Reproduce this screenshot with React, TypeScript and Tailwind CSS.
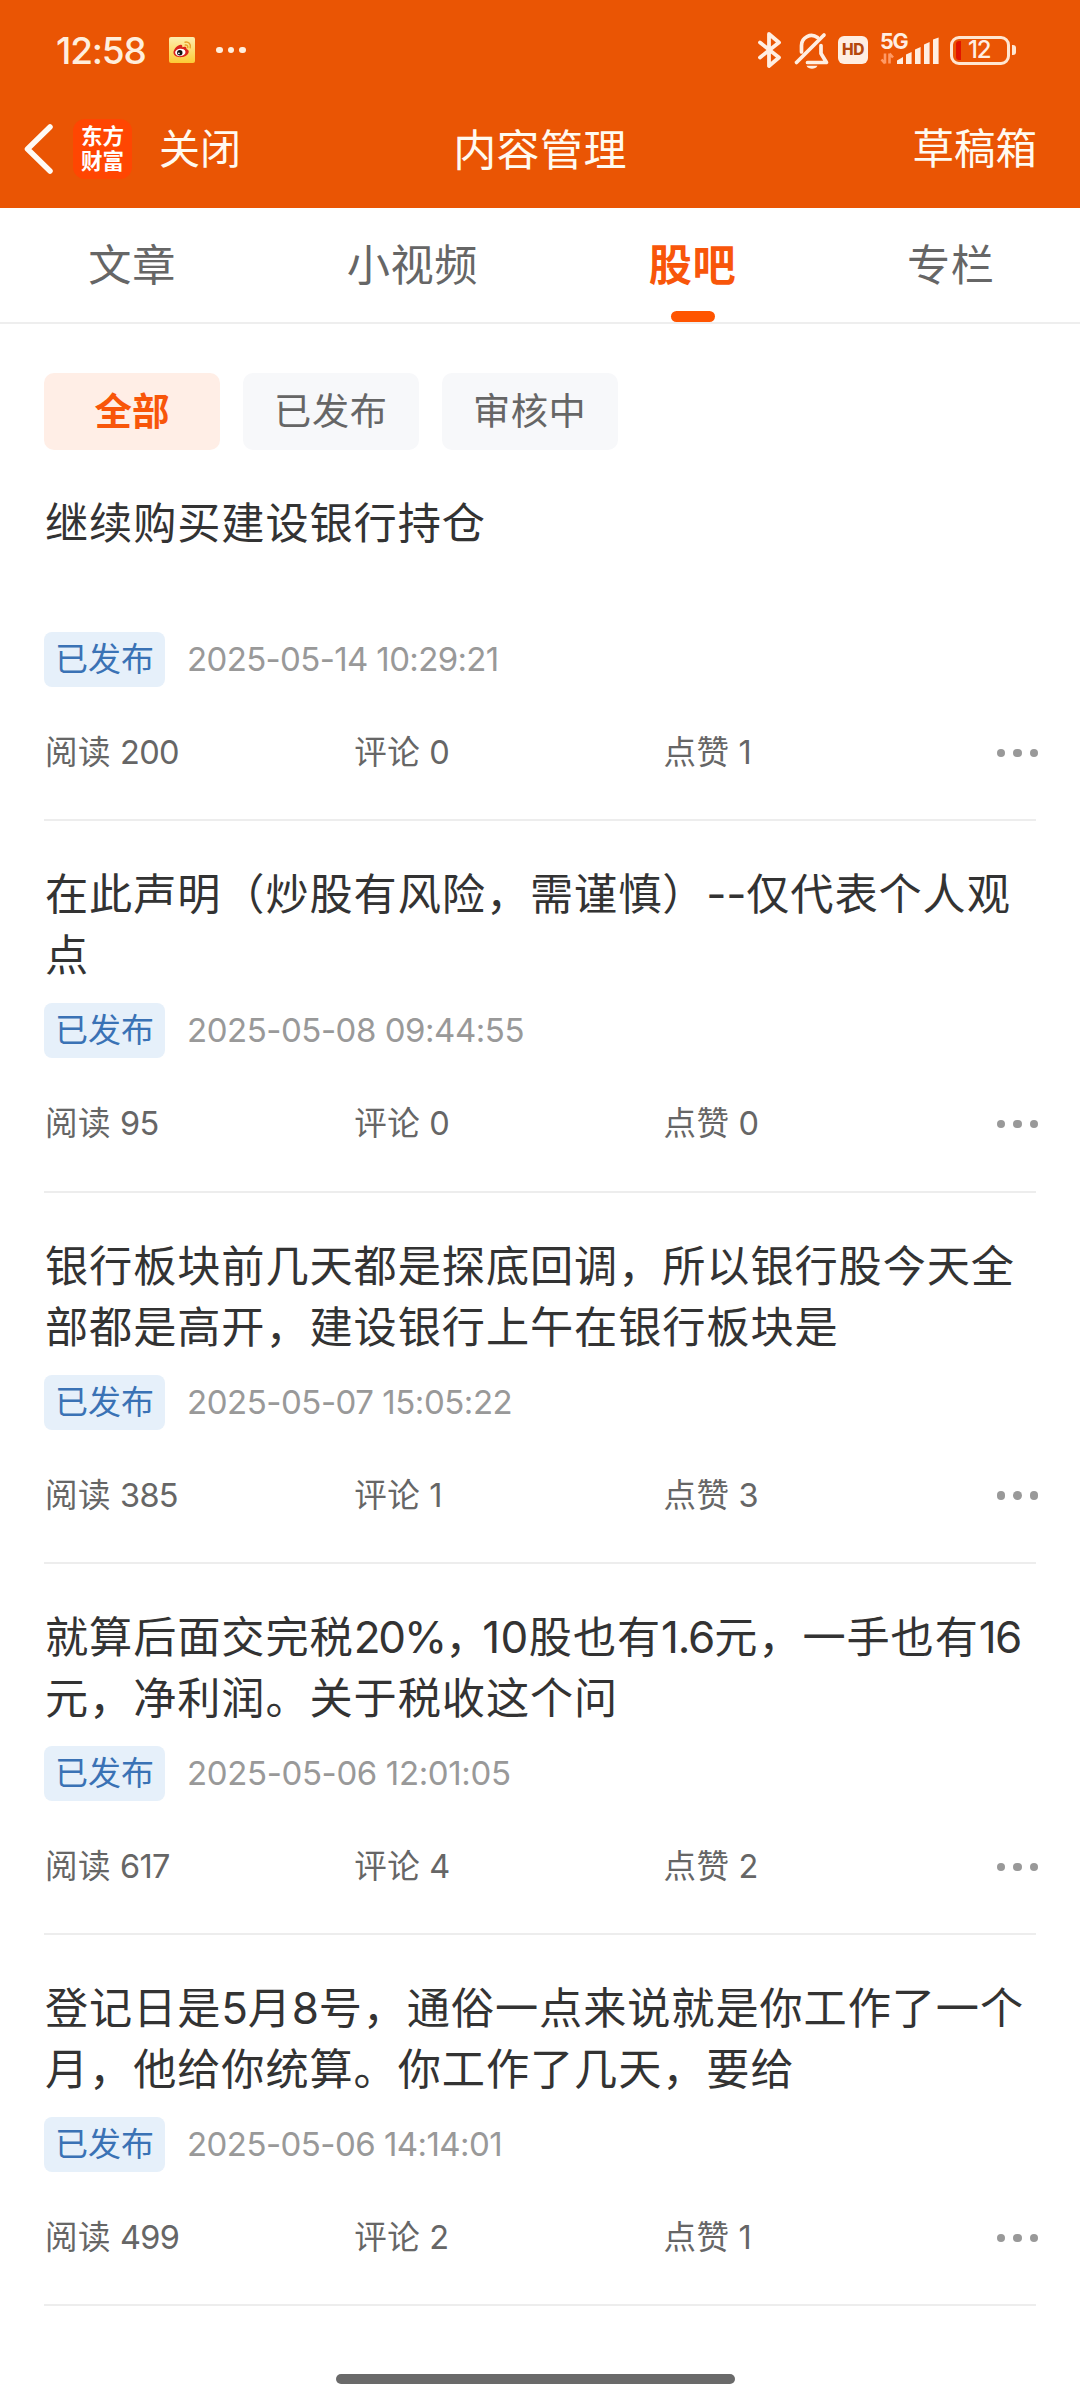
import React from 'react';

type Post = {
  lines: React.ReactNode[];
  date: string;
  dateClass: string;
  stats: [string, string, string];
};

const posts: Post[] = [
  {
    lines: ['继续购买建设银行持仓'],
    date: '2025-05-14 10:29:21',
    dateClass: 'tracking-[-0.64px]',
    stats: ['200', '0', '1'],
  },
  {
    lines: [
      <>
        在此声明（炒股有风险，需谨慎）<span className="text-[44px] tracking-[-0.3px]">--</span>仅代表个人观
      </>,
      '点',
    ],
    date: '2025-05-08 09:44:55',
    dateClass: 'tracking-[-0.47px]',
    stats: ['95', '0', '0'],
  },
  {
    lines: ['银行板块前几天都是探底回调，所以银行股今天全', '部都是高开，建设银行上午在银行板块是'],
    date: '2025-05-07 15:05:22',
    dateClass: 'tracking-[-0.47px]',
    stats: ['385', '1', '3'],
  },
  {
    lines: [
      <>
        就算后面交完税<span className="text-[44px] tracking-[-2.1px]">20%</span>
        <span className="tracking-[-6px]">，</span>
        <span className="text-[44px] tracking-[0.4px]">10</span>股也有
        <span className="text-[44px] tracking-[-1.2px]">1.6</span>元，一手也有
        <span className="text-[44px] tracking-[-1.6px]">16</span>
      </>,
      '元，净利润。关于税收这个问',
    ],
    date: '2025-05-06 12:01:05',
    dateClass: 'tracking-[-0.37px]',
    stats: ['617', '4', '2'],
  },
  {
    lines: [
      <>
        登记日是<span className="text-[44px] tracking-[-0.4px]">5</span>月
        <span className="text-[44px] tracking-[-0.4px]">8</span>号，通俗一点来说就是你工作了一个
      </>,
      '月，他给你统算。你工作了几天，要给',
    ],
    date: '2025-05-06 14:14:01',
    dateClass: 'tracking-[-0.55px]',
    stats: ['499', '2', '1'],
  },
];

const tabs = ['文章', '小视频', '股吧', '专栏'];
const filters = ['全部', '已发布', '审核中'];
const statLabels = ['阅读', '评论', '点赞'];

function WeiboBadge() {
  return (
    <svg className="h-[26px] w-[26px]" viewBox="0 0 26 26">
      <defs>
        <linearGradient id="wb" x1="0" y1="0" x2="0" y2="1">
          <stop offset="0" stopColor="#fdeeb0" />
          <stop offset="1" stopColor="#fdcb35" />
        </linearGradient>
      </defs>
      <rect width="26" height="26" rx="2" fill="url(#wb)" />
      <path d="M4.500 15.500c0-3.500 4.500-8 7.500-7.800 1.300.2 1.600 1.300 1.200 2.600 2-.9 4.500-.9 4.300 1.600 2.200.7 2.500 2 2.100 3.600-.9 3-4.500 4.700-8.300 4.700-3.700 0-6.800-1.900-6.800-4.700z" fill="#d9231c" />
      <ellipse cx="11.300" cy="15.400" rx="5.200" ry="3.700" fill="#fff" transform="rotate(-8 11.300 15.400)" />
      <circle cx="10.800" cy="15.700" r="2.700" fill="#111" />
      <circle cx="9.900" cy="16.300" r=".9" fill="#fff" />
      <path d="M16 5.200c3.500-.8 6.200 2 5.200 5.600M16.300 8c1.600-.3 2.800.9 2.400 2.500" fill="none" stroke="#e9a02c" strokeWidth="1.400" strokeLinecap="round" />
    </svg>
  );
}

function StatusIcons() {
  return (
    <div className="flex items-center text-[#ffeee2]">
      <svg className="h-[38px] w-[26px]" viewBox="0 0 26 38" fill="none" stroke="currentColor" strokeWidth="3.800" strokeLinecap="round" strokeLinejoin="round">
        <path d="M3 11.500L22 26.500 12 35V3L22 11.500 3 26.500" />
      </svg>
      <svg className="ml-[10px] h-[38px] w-[38px]" viewBox="0 0 38 38" fill="none" stroke="currentColor" strokeWidth="3.700" strokeLinecap="round" strokeLinejoin="round">
        <path d="M8.500 21V14.500A10 10 0 0 1 24.500 6.500" />
        <path d="M28 14.500v8l5.500 9H14.500" />
        <path d="M31 4L3.500 31.500" />
        <path d="M13.500 34.800h11c-1.200 2.200-3.200 3-5.500 3s-4.400-.8-5.500-3z" fill="currentColor" stroke="none" />
      </svg>
      <div className="ml-[7px] flex h-[28px] w-[30px] items-center justify-center rounded-[6px] bg-[#ffeee2] text-[15.500px] leading-none font-extrabold tracking-[-0.5px] text-[#b5480c]">
        HD
      </div>
      <div className="relative ml-[12px] h-[38px] w-[60px]">
        <span className="absolute top-[0px] left-0 text-[21.500px] leading-[21px] font-bold tracking-[-1.2px]">5G</span>
        <svg className="absolute inset-0 h-[38px] w-[60px]" viewBox="0 0 60 38" fill="currentColor">
          <path d="M5 22.500v10M1.500 28.500L5 32.500M9.500 32.500v-10M13 26.500L9.500 22.500" fill="none" stroke="#ff9a66" strokeWidth="2.600" />
          <path d="M17 33v-3.500l6-3.500V33z" />
          <path d="M26 33V23.500l5.600-2.500V33z" />
          <path d="M35 33V18.500l5.600-2.500V33z" />
          <path d="M44 33V13.500l5.600-2.500V33z" />
          <path d="M53 33V8.500l5.600-2V33z" />
        </svg>
      </div>
      <div className="ml-[10px] flex h-[29px] w-[60px] items-center rounded-[9px] border-[3px] border-[#ffe6d2] pl-[3px]">
        <div className="h-[19px] w-[5px] rounded-l-[3px] bg-[#e11400]" />
        <div className="ml-[7px] text-[24px] leading-none font-medium tracking-[-1.2px]">12</div>
      </div>
      <div className="ml-[2px] h-[10px] w-[4px] rounded-r-[3px] bg-[#ffe6d2]" />
    </div>
  );
}

function Header() {
  return (
    <header className="h-[208px] bg-[#ea5504] text-[#fffaf0]">
      <div className="flex h-[100px] items-center justify-between pr-[64px] pl-[56px]">
        <div className="flex items-center">
          <span className="w-[90px] text-[37px] leading-none font-medium tracking-[-1.2px] whitespace-nowrap text-[#ffeedd]">12:58</span>
          <div className="ml-[23px]">
            <WeiboBadge />
          </div>
          <div className="ml-[21px] flex gap-[5px]">
            {[0, 1, 2].map((i) => (
              <span key={i} className="h-[6.500px] w-[6.500px] rounded-full bg-[#ffeedd]" />
            ))}
          </div>
        </div>
        <StatusIcons />
      </div>
      <div className="grid h-[98px] grid-cols-3 items-center">
        <div className="flex items-center">
          <svg className="ml-[22px] h-[52px] w-[32px]" viewBox="0 0 32 52" fill="none" stroke="#fffaf4" strokeWidth="5.500">
            <path d="M28 4L5.500 26L28 48" strokeLinecap="round" strokeLinejoin="round" />
          </svg>
          <div className="ml-[19px] flex h-[60px] w-[59px] flex-col items-center justify-center rounded-[12px] bg-[#ff4602] text-[21.500px] leading-[25px] font-bold text-white">
            <span>东方</span>
            <span>财富</span>
          </div>
          <span className="ml-[27px] text-[41px] leading-[60px]">关闭</span>
        </div>
        <h1 className="pt-[1px] text-center text-[43px] leading-[60px] tracking-[0.4px]">内容管理</h1>
        <span className="pr-[43px] text-right text-[41.500px] leading-[60px]">草稿箱</span>
      </div>
    </header>
  );
}

function PostItem({ post }: { post: Post }) {
  return (
    <article className="flex h-[371.250px] flex-col border-b-2 border-[#ededed] pt-[43px]">
      <h2 className="h-[122px] pl-[1px] text-[43.200px] leading-[61px] tracking-[0.9px] whitespace-nowrap text-[#333]">
        {post.lines.map((line, i) => (
          <div key={i} className="h-[61px]">
            {line}
          </div>
        ))}
      </h2>
      <div className="mt-[17px] flex h-[55px] items-center">
        <span className="flex h-[55px] w-[121px] items-center justify-center rounded-[8px] bg-[#e6f0fa] text-[33px] leading-none text-[#3a72b5]">
          已发布
        </span>
        <time className={`ml-[22px] text-[33px] leading-none whitespace-nowrap text-[#999] ${post.dateClass}`}>{post.date}</time>
      </div>
      <div className="mt-[43px] flex h-[46px] items-center text-[32.500px] leading-[46px] text-[#666]">
        {post.stats.map((value, i) => (
          <div key={i} className="flex w-[309.300px] pl-[1px]">
            <span className="tracking-[0.5px]">{statLabels[i]}</span>
            <span className="ml-[9px] tracking-[-0.7px]">{value}</span>
          </div>
        ))}
        <div className="-mr-[2px] ml-auto flex gap-[8px]">
          {[0, 1, 2].map((i) => (
            <span key={i} className="h-[8.400px] w-[8.400px] rounded-full bg-[#999]" />
          ))}
        </div>
      </div>
    </article>
  );
}

export default function App() {
  return (
    <div className="flex h-[2400px] w-[1080px] flex-col overflow-hidden bg-white font-['Inter','Noto_Sans_CJK_SC',sans-serif]">
      <Header />
      <nav className="flex h-[116px] justify-around border-b-2 border-[#eee] pl-[3px] text-[43.200px] leading-[114px] tracking-[0.6px] text-[#666]">
        {tabs.map((tab, i) => (
          <div key={tab} className={i === 2 ? 'relative font-bold text-[#f8560a]' : 'relative'}>
            {tab}
            {i === 2 && <span className="absolute bottom-0 left-1/2 h-[11px] w-[44px] -translate-x-1/2 rounded-full bg-[#ff5400]" />}
          </div>
        ))}
      </nav>
      <div className="mt-[49px] flex gap-[22.800px] px-[44px]">
        {filters.map((f, i) => (
          <div
            key={f}
            className={
              i === 0
                ? 'flex h-[77px] w-[176px] items-center justify-center rounded-[10px] bg-[#ffeee6] text-[37.500px] leading-none font-bold text-[#f8560a]'
                : 'flex h-[77px] w-[176px] items-center justify-center rounded-[10px] bg-[#f7f8fa] text-[37.200px] leading-none tracking-[0.6px] text-[#666]'
            }
          >
            {f}
          </div>
        ))}
      </div>
      <main className="px-[44px]">
        {posts.map((p) => (
          <PostItem key={p.date} post={p} />
        ))}
      </main>
      <div className="mt-auto mb-[16px] ml-[336px] h-[10px] w-[399px] rounded-full bg-[#6a6a6a]" />
    </div>
  );
}
